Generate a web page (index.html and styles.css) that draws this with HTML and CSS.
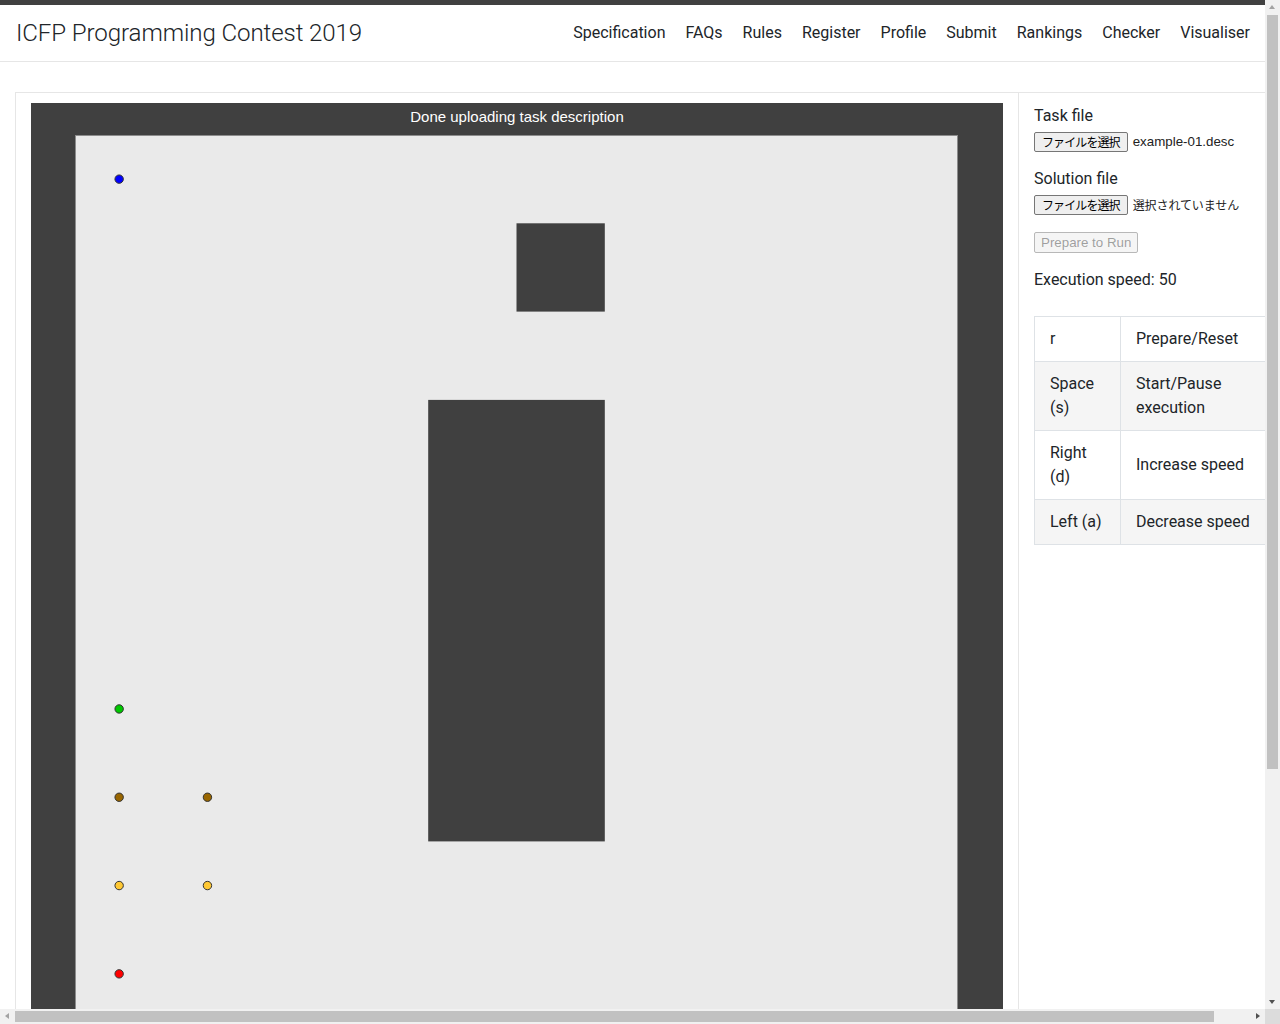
FILE: index.html
```html
<!DOCTYPE html>
<html lang="en">
<head>
<meta charset="utf-8">
<title>ICFP Programming Contest 2019 - Visualiser</title>
<link rel="stylesheet" href="styles.css">
</head>
<body>
<header class="navbar">
  <div class="brand">ICFP Programming Contest 2019</div>
  <nav class="nav">
    <a href="#">Specification</a>
    <a href="#">FAQs</a>
    <a href="#">Rules</a>
    <a href="#">Register</a>
    <a href="#">Profile</a>
    <a href="#">Submit</a>
    <a href="#">Rankings</a>
    <a href="#">Checker</a>
    <a href="#">Visualiser</a>
  </nav>
</header>
<main class="main">
  <div class="card">
    <div class="viz-col">
      <div class="viz">
        <div class="status">Done uploading task description</div>
        <div class="map-wrap">
          <svg class="map" width="883" height="883" viewBox="0 0 883 883">
            <rect x="0.5" y="0.5" width="882" height="882" fill="#eaeaea" stroke="#8c8c8c" stroke-width="1"/>
            <rect x="441.5" y="88.3" width="88.3" height="88.3" fill="#404040"/>
            <rect x="353.2" y="264.9" width="176.6" height="441.5" fill="#404040"/>
            <circle cx="44.15" cy="44.15" r="4.2" fill="#0000ff" stroke="#333" stroke-width="1"/>
            <circle cx="44.15" cy="573.95" r="4.2" fill="#00c800" stroke="#333" stroke-width="1"/>
            <circle cx="44.15" cy="662.25" r="4.2" fill="#996600" stroke="#333" stroke-width="1"/>
            <circle cx="132.45" cy="662.25" r="4.2" fill="#996600" stroke="#333" stroke-width="1"/>
            <circle cx="44.15" cy="750.55" r="4.2" fill="#ffc833" stroke="#333" stroke-width="1"/>
            <circle cx="132.45" cy="750.55" r="4.2" fill="#ffc833" stroke="#333" stroke-width="1"/>
            <circle cx="44.15" cy="838.85" r="4.2" fill="#ff0000" stroke="#333" stroke-width="1"/>
          </svg>
        </div>
      </div>
    </div>
    <aside class="side">
      <label class="field-label">Task file</label>
      <div class="file-row">
        <span class="file-btn">ファイルを選択</span>
        <span class="file-name">example-01.desc</span>
      </div>
      <label class="field-label second">Solution file</label>
      <div class="file-row">
        <span class="file-btn">ファイルを選択</span>
        <span class="file-name jp">選択されていません</span>
      </div>
      <button class="run-btn" disabled>Prepare to Run</button>
      <p class="speed">Execution speed: 50</p>
      <table class="keys">
        <colgroup><col class="c1"><col class="c2"></colgroup>
        <tbody>
          <tr><td>r</td><td>Prepare/Reset</td></tr>
          <tr><td>Space (s)</td><td>Start/Pause execution</td></tr>
          <tr><td>Right (d)</td><td>Increase speed</td></tr>
          <tr><td>Left (a)</td><td>Decrease speed</td></tr>
        </tbody>
      </table>
    </aside>
  </div>
</main>
<div class="vscroll" aria-hidden="true">
  <span class="arrow up"></span>
  <span class="vthumb"></span>
  <span class="arrow down"></span>
</div>
<div class="hscroll" aria-hidden="true">
  <span class="arrow left"></span>
  <span class="hthumb"></span>
  <span class="arrow right"></span>
</div>
<div class="scroll-corner" aria-hidden="true"></div>
</body>
</html>
```

FILE: styles.css
```css
html, body {
  margin: 0;
  padding: 0;
}
body {
  font-family: Roboto, "Noto Sans", "Liberation Sans", sans-serif;
  font-size: 16px;
  line-height: 1.5;
  color: #212529;
  background: #fff;
}
.navbar {
  box-sizing: border-box;
  width: 1265px;
  height: 62px;
  border-top: 5px solid #404040;
  border-bottom: 1px solid #e6e6e6;
  display: flex;
  align-items: center;
  justify-content: space-between;
  padding: 0 15px 0 16px;
}
.brand {
  font-family: "Roboto Light", Roboto, sans-serif;
  font-weight: 300;
  font-size: 24.1px;
  line-height: 32px;
  color: #212529;
  letter-spacing: -0.1px;
}
.nav {
  display: flex;
  gap: 20px;
}
.nav a {
  color: #212529;
  text-decoration: none;
  font-size: 16px;
  line-height: 24px;
}
.main {
  box-sizing: border-box;
  width: 1303px;
  padding: 30px 15px 16px;
}
.card {
  display: flex;
  border: 1px solid #e6e6e6;
  background: #fff;
}
.viz-col {
  padding: 10px 15px 10px 15px;
}
.viz {
  width: 972px;
  background: #404040;
}
.status {
  height: 32px;
  line-height: 28px;
  text-align: center;
  color: #fff;
  font-family: "Liberation Sans", Arial, sans-serif;
  font-size: 15px;
}
.map-wrap {
  padding: 0 45px 265px 44px;
}
.map {
  display: block;
}
.side {
  flex: 1;
  border-left: 1px solid #e6e6e6;
  padding: 11px 15px 10px;
}
.field-label {
  display: block;
  font-size: 16px;
  line-height: 24px;
}
.field-label.second {
  margin-top: 15px;
}
.file-row {
  margin-top: 4px;
  display: flex;
  align-items: center;
  height: 20px;
  font-family: "Liberation Sans", "Noto Sans CJK JP", sans-serif;
  font-size: 13.33px;
  color: #212529;
}
.file-btn {
  box-sizing: border-box;
  height: 20px;
  line-height: 18px;
  padding: 0 7px;
  border: 1px solid #767676;
  border-radius: 2px;
  background: #efefef;
  color: #000;
  font-family: "Noto Sans CJK JP", sans-serif;
  font-size: 12px;
  letter-spacing: -0.9px;
  white-space: nowrap;
}
.file-name {
  margin-left: 5px;
  white-space: nowrap;
  color: #222;
}
.file-name.jp {
  font-family: "Noto Sans CJK JP", sans-serif;
  font-size: 12px;
  letter-spacing: -0.1px;
}
.run-btn {
  display: block;
  margin-top: 17px;
  box-sizing: border-box;
  height: 21px;
  padding: 0 6px;
  font-family: "Liberation Sans", Arial, sans-serif;
  font-size: 13.33px;
  color: rgba(16, 16, 16, 0.4);
  background: #f5f5f5;
  border: 1px solid #b8b8b8;
  border-radius: 2px;
}
.speed {
  margin: 15px 0 0;
  line-height: 24px;
}
.keys {
  margin-top: 24px;
  border-collapse: collapse;
  table-layout: fixed;
  width: 233px;
}
.keys col.c1 { width: 86px; }
.keys col.c2 { width: 147px; }
.keys td {
  border: 1px solid #dee2e6;
  padding: 10px 15px;
  vertical-align: middle;
  line-height: 24px;
}
.keys tr:nth-child(even) td {
  background: #f5f5f5;
}

/* emulated browser scrollbars */
.vscroll {
  position: fixed;
  top: 0;
  right: 0;
  width: 15px;
  height: 1009px;
  background: #f1f1f1;
}
.vthumb {
  position: absolute;
  left: 2px;
  top: 15px;
  width: 11px;
  height: 754px;
  background: #c1c1c1;
}
.hscroll {
  position: fixed;
  left: 0;
  bottom: 0;
  width: 1265px;
  height: 15px;
  background: #f1f1f1;
}
.hthumb {
  position: absolute;
  top: 2px;
  left: 15px;
  width: 1199px;
  height: 11px;
  background: #c1c1c1;
}
.scroll-corner {
  position: fixed;
  right: 0;
  bottom: 0;
  width: 15px;
  height: 15px;
  background: #dcdcdc;
}
.arrow {
  position: absolute;
  width: 0;
  height: 0;
  border-style: solid;
}
.arrow.up {
  left: 4px;
  top: 5px;
  border-width: 0 3.5px 4px 3.5px;
  border-color: transparent transparent #a3a3a3 transparent;
}
.arrow.down {
  left: 4px;
  bottom: 5px;
  border-width: 4px 3.5px 0 3.5px;
  border-color: #505050 transparent transparent transparent;
}
.arrow.left {
  left: 5px;
  top: 4px;
  border-width: 3.5px 4px 3.5px 0;
  border-color: transparent #a3a3a3 transparent transparent;
}
.arrow.right {
  right: 5px;
  top: 4px;
  border-width: 3.5px 0 3.5px 4px;
  border-color: transparent transparent transparent #505050;
}
```
